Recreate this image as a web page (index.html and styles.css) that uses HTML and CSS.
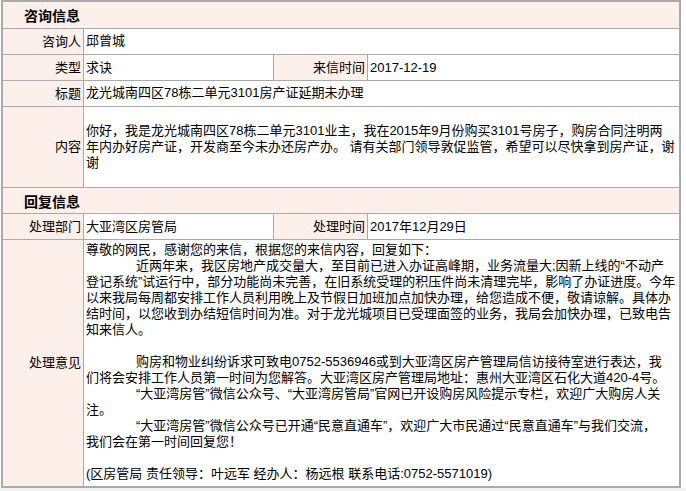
FILE: index.html
```html
<!DOCTYPE html>
<html lang="zh-CN">
<head>
<meta charset="utf-8">
<title>咨询信息</title>
<link rel="stylesheet" href="styles.css">
</head>
<body>
<div class="sheet">
  <div class="head">咨询信息</div>

  <div class="label">咨询人</div>
  <div class="value span3">邱曾城</div>

  <div class="label">类型</div>
  <div class="value">求诀</div>
  <div class="label">来信时间</div>
  <div class="value">2017-12-19</div>

  <div class="label">标题</div>
  <div class="value span3">龙光城南四区78栋二单元3101房产证延期未办理</div>

  <div class="label tall">内容</div>
  <div class="value span3 tall">你好，我是龙光城南四区78栋二单元3101业主，我在2015年9月份购买3101号房子，购房合同注明两<br>年内办好房产证，开发商至今未办还房产办。 请有关部门领导敦促监管，希望可以尽快拿到房产证，谢<br>谢</div>

  <div class="head">回复信息</div>

  <div class="label">处理部门</div>
  <div class="value">大亚湾区房管局</div>
  <div class="label">处理时间</div>
  <div class="value">2017年12月29日</div>

  <div class="label">处理意见</div>
  <div class="value span3 reply">尊敬的网民，感谢您的来信，根据您的来信内容，回复如下：<br><span class="indent"></span>近两年来，我区房地产成交量大，至目前已进入办证高峰期，业务流量大;因新上线的“不动产<br>登记系统”试运行中，部分功能尚未完善，在旧系统受理的积压件尚未清理完毕，影响了办证进度。今年<br>以来我局每周都安排工作人员利用晚上及节假日加班加点加快办理，给您造成不便，敬请谅解。具体办<br>结时间，以您收到办结短信时间为准。对于龙光城项目已受理面签的业务，我局会加快办理，已致电告<br>知来信人。<br><br><span class="indent"></span>购房和物业纠纷诉求可致电0752-5536946或到大亚湾区房产管理局信访接待室进行表达，我<br>们将会安排工作人员第一时间为您解答。大亚湾区房产管理局地址：惠州大亚湾区石化大道420-4号。<br><span class="indent"></span>“大亚湾房管”微信公众号、“大亚湾房管局”官网已开设购房风险提示专栏，欢迎广大购房人关<br>注。<br><span class="indent"></span>“大亚湾房管”微信公众号已开通“民意直通车”，欢迎广大市民通过“民意直通车”与我们交流，<br>我们会在第一时间回复您！<br><br>(区房管局 责任领导：叶远军 经办人：杨远根 联系电话:0752-5571019)</div>
</div>
<div class="below"></div>
</body>
</html>
```

FILE: styles.css
```css
html, body {
  margin: 0;
  padding: 0;
  background: #ffffff;
}

body {
  font-family: "Liberation Sans", "Noto Sans CJK SC", sans-serif;
  font-size: 13px;
  color: #000000;
}

.sheet {
  margin: 0 0 0 1px;
  width: 676px;
  display: grid;
  grid-template-columns: 80px 189px 93px 311px;
  gap: 1px;
  background: #aaaaaa;
  border: 1px solid #aaaaaa;
  padding: 1px;
}

.head {
  grid-column: 1 / -1;
  height: 25px;
  background: #fdf0eb;
  font-size: 14px;
  font-weight: bold;
  padding-left: 21px;
  display: flex;
  align-items: center;
}

.sheet > .head:first-child {
  height: 26px;
}

.label {
  background: #fdf0eb;
  display: flex;
  align-items: center;
  justify-content: flex-end;
  padding-right: 2px;
  min-height: 25px;
  line-height: 16px;
  white-space: nowrap;
}

.value {
  background: #ffffff;
  display: flex;
  align-items: center;
  padding-left: 2px;
  min-height: 25px;
  line-height: 16px;
}

.span3 {
  grid-column: span 3;
}

.tall {
  height: 80px;
}

.value.span3 {
  display: block;
  padding-top: 4px;
  padding-bottom: 4px;
  box-sizing: border-box;
  white-space: nowrap;
}

.value.span3.tall {
  display: flex;
  align-items: center;
  padding-top: 0;
  padding-bottom: 0;
}

.value.span3.reply {
  display: block;
  padding-top: 2px;
  padding-bottom: 4px;
}

.indent {
  display: inline-block;
  width: 50px;
}

.below {
  height: 20px;
  background: #f3f3f3;
}
```
